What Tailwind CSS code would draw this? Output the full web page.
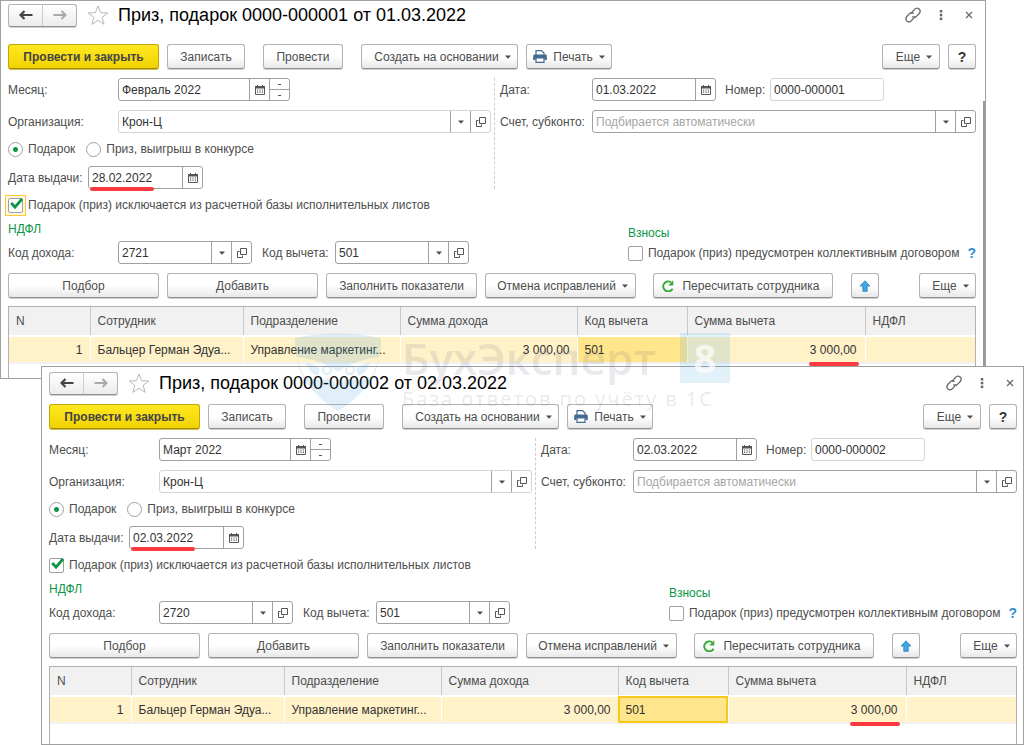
<!DOCTYPE html>
<html lang="ru">
<head>
<meta charset="utf-8">
<title>Приз, подарок</title>
<script src="https://cdn.jsdelivr.net/npm/@tailwindcss/browser@4"></script>
</head>
<body class="bg-white text-xs text-[#4d4d4d]" style="font-family:'Liberation Sans',Arial,sans-serif">
<svg class="hidden" aria-hidden="true">
  <symbol id="back" viewBox="0 0 14 10"><path d="M5.500 1 1.500 5l4 4M2 5h11.500" fill="none" stroke="currentColor" stroke-width="2.200"/></symbol>
  <symbol id="fwd" viewBox="0 0 14 10"><path d="M8.500 1l4 4-4 4M12 5H.5" fill="none" stroke="currentColor" stroke-width="2"/></symbol>
  <symbol id="star" viewBox="0 0 22 20"><path d="M11 1l2.600 6.700 7.200.3-5.700 4.400 2 6.900L11 15.300l-6.100 4 2-6.900L1.200 8l7.200-.3z" fill="#fff" stroke="#b4b9bd" stroke-width="1"/></symbol>
  <symbol id="link" viewBox="0 0 16 16"><g fill="none" stroke="#666" stroke-width="1.300" stroke-linecap="round"><path d="M6.300 6.200 9.300 2.700c1.300-1.500 3.400-1.900 4.800-.7 1.300 1.200 1.300 3 .1 4.500L11.500 9.400c-1 1.100-2.600 1.200-3.700.3"/><path d="M9.700 9.800 6.700 13.300c-1.300 1.500-3.400 1.900-4.800.7-1.300-1.200-1.300-3-.1-4.500L4.500 6.600c1-1.100 2.600-1.200 3.700-.3"/></g></symbol>
  <symbol id="dots" viewBox="0 0 4 12"><g fill="#666"><rect x=".8" y="1" width="2.500" height="2.500"/><rect x=".8" y="4.800" width="2.500" height="2.500"/><rect x=".8" y="8.600" width="2.500" height="2.500"/></g></symbol>
  <symbol id="close" viewBox="0 0 8 8"><path d="M1 1l6 6M7 1 1 7" stroke="#666" stroke-width="1.200"/></symbol>
  <symbol id="caret" viewBox="0 0 6 4"><path d="M0 .5h6L3 3.700z" fill="#4d4d4d"/></symbol>
  <symbol id="cal" viewBox="0 0 10 10"><path d="M.5 1.500h9v8h-9z" fill="#fff" stroke="#555"/><path d="M0 1h10v2.500H0z" fill="#555"/><path d="M2.500 0v2M7.500 0v2" stroke="#555"/><path d="M2 5h6M2 7.200h6" stroke="#555" stroke-width="1.200" stroke-dasharray="1.200 1.200"/></symbol>
  <symbol id="open" viewBox="0 0 10 10"><path d="M3.500.5h6v6h-6z" fill="#fff" stroke="#555"/><path d="M2.500 3.500h-2v6h5v-2" fill="none" stroke="#555"/></symbol>
  <symbol id="print" viewBox="0 0 14 13"><path d="M3 5V.6h5.500L11 3v2" fill="#fff" stroke="#446a91" stroke-width="1.200"/><path d="M1.500 4.500h11a1.300 1.300 0 0 1 1.300 1.300V10h-2.300V8h-9v2H.2V5.800a1.300 1.300 0 0 1 1.300-1.300z" fill="#446a91"/><path d="M3 8h8v4.400H3z" fill="#fff" stroke="#446a91" stroke-width="1.200"/></symbol>
  <symbol id="redo" viewBox="0 0 12 12"><path d="M10.600 8.800A5 5 0 1 1 9 2.200" fill="none" stroke="#36a936" stroke-width="1.900"/><path d="M11.300.3v5.200H6.200z" fill="#36a936"/></symbol>
  <symbol id="up" viewBox="0 0 12 12"><path d="M6 .8 11 6H8.200v5.300H3.800V6H1z" fill="#3fa9e8" stroke="#2b7fb8" stroke-width=".8"/></symbol>
  <symbol id="tick" viewBox="0 0 13 12"><path d="M1.200 5 5 9.200 12 1" fill="none" stroke="#0a9646" stroke-width="2.800"/></symbol>
</svg>

<main id="desktop" class="relative min-h-screen overflow-hidden"></main>

<script>
const btn = 'flex h-[25px] shrink-0 items-center justify-center rounded-[3px] border border-[#b3b3b3] border-b-[#8f8f8f] bg-linear-to-b from-white from-50% to-[#e8e8e8] shadow-[0_1px_0_#d0d0d0] whitespace-nowrap';
const fld = 'relative flex h-[23px] shrink-0 rounded-[3px] border border-[#a0a0a0] bg-white';
const pale = 'relative flex h-[23px] shrink-0 rounded-[3px] border border-[#d4d4d4] bg-white';
const inp = 'min-w-0 flex-1 bg-transparent px-[3px] text-[#333] outline-none placeholder:text-[#a6a6a6]';
const side = 'flex w-5 shrink-0 items-center justify-center border-l border-[#a0a0a0]';
const icon = (id, cls) => `<svg class="${cls}" aria-hidden="true"><use href="#${id}"/></svg>`;
const caret = icon('caret', 'h-1 w-1.5');
const calBtn = `<button class="${side}" aria-label="Календарь">${icon('cal', 'size-2.5')}</button>`;
const pick = `<button class="${side}" aria-label="Выбрать">${caret}</button><button class="${side}" aria-label="Открыть">${icon('open', 'size-2.5')}</button>`;

function card(d) {
  const id = d.id;
  return `
<section class="${d.frame}" aria-label="${d.title}">
  <header class="${d.head}">
    <div class="flex h-[23px] w-[69px] shrink-0 rounded-[3px] border border-[#b3b3b3] border-b-[#8f8f8f] bg-linear-to-b from-white to-[#ececec] shadow-[0_1px_0_#d0d0d0]">
      <button class="flex flex-1 items-center justify-center text-[#444]" aria-label="Назад">${icon('back', 'h-2.5 w-3.5')}</button>
      <button class="flex flex-1 items-center justify-center border-l border-[#ccc] text-[#aaa]" aria-label="Вперед">${icon('fwd', 'h-2.5 w-3.5')}</button>
    </div>
    <button class="ml-[10px]" aria-label="В избранное">${icon('star', 'h-5 w-[22px]')}</button>
    <h1 class="ml-[9px] text-lg leading-6 whitespace-nowrap text-black">${d.title}</h1>
    <div class="ml-auto flex items-center pr-[3px]">
      <button aria-label="Ссылка">${icon('link', 'size-4')}</button>
      <button class="ml-[18px]" aria-label="Меню">${icon('dots', 'h-3 w-1')}</button>
      <button class="ml-[22px]" aria-label="Закрыть">${icon('close', 'size-2')}</button>
    </div>
  </header>

  <div class="${d.bar}">
    <button class="flex h-[25px] w-[151px] items-center justify-center rounded-[3px] border border-[#c3a800] border-b-[#a08a00] bg-linear-to-b from-[#ffe81f] to-[#f2d200] font-bold whitespace-nowrap text-[#444] shadow-[0_1px_0_#cdbb55]">Провести и закрыть</button>
    <button class="${btn} ml-2 w-[78px]">Записать</button>
    <button class="${btn} ml-[18px] w-[80px]">Провести</button>
    <button class="${btn} ml-[18px] w-[157px] gap-1.5 pl-1.5">Создать на основании ${caret}</button>
    <button class="${btn} ml-2 w-[86px] gap-1.5">${icon('print', 'h-[13px] w-3.5')}Печать ${caret}</button>
    <button class="${btn} ml-auto w-[58px] gap-1.5 pl-1.5">Еще ${caret}</button>
    <button class="${btn} ml-2 w-7 text-sm font-bold text-[#333]" aria-label="Справка">?</button>
  </div>

  <div class="mt-[9px] flex">
    <div class="flex w-[487px] shrink-0 flex-col border-r border-dashed border-[#ccc]">
      <div class="flex items-center">
        <label for="m${id}" class="w-[110px]">Месяц:</label>
        <div class="${fld} w-[172px]"><input id="m${id}" class="${inp}" value="${d.month}">${calBtn}
          <div class="flex w-5 flex-col border-l border-[#a0a0a0]">
            <button class="flex flex-1 items-center justify-center border-b border-[#a0a0a0]" aria-label="Больше"><span class="h-px w-[3px] bg-[#555]"></span></button>
            <button class="flex flex-1 items-center justify-center" aria-label="Меньше"><span class="h-px w-[3px] bg-[#555]"></span></button>
          </div>
        </div>
      </div>
      <div class="mt-[9px] flex items-center">
        <label for="o${id}" class="w-[110px]">Организация:</label>
        <div class="${pale} w-[373px]"><input id="o${id}" class="${inp}" value="Крон-Ц">${pick}</div>
      </div>
      <div class="mt-2 flex h-4 items-center">
        <input id="g${id}" type="radio" name="k${id}" checked class="size-[15px] appearance-none rounded-full border border-[#a0a0a0] bg-[radial-gradient(circle,#0a9646_2px,white_3px)]"><label for="g${id}" class="ml-[5px]">Подарок</label>
        <input id="p${id}" type="radio" name="k${id}" class="ml-[11px] size-[15px] appearance-none rounded-full border border-[#a0a0a0] bg-white"><label for="p${id}" class="ml-[5px]">Приз, выигрыш в конкурсе</label>
      </div>
      <div class="mt-[9px] flex items-center">
        <label for="v${id}" class="w-[80px] whitespace-nowrap">Дата выдачи:</label>
        <div class="${fld} w-[115px]"><input id="v${id}" class="${inp}" value="${d.issued}">${calBtn}<span class="absolute top-[20px] left-[1px] h-1 w-16 rounded-full bg-[#fa3a40]"></span></div>
      </div>
    </div>
    <div class="ml-[5px] flex min-w-0 flex-1 flex-col">
      <div class="flex items-center">
        <label for="d${id}" class="w-[92px]">Дата:</label>
        <div class="${fld} w-[124px]"><input id="d${id}" class="${inp}" value="${d.date}">${calBtn}</div>
        <label for="n${id}" class="ml-[9px] w-[45px]">Номер:</label>
        <div class="${pale} w-[114px]"><input id="n${id}" class="${inp}" value="${d.number}"></div>
      </div>
      <div class="mt-[9px] flex items-center">
        <label for="s${id}" class="w-[92px] whitespace-nowrap">Счет, субконто:</label>
        <div class="${fld} min-w-0 flex-1"><input id="s${id}" class="${inp}" placeholder="Подбирается автоматически">${pick}</div>
      </div>
    </div>
  </div>

  <div class="mt-2 flex h-4 items-center">
    <span class="relative size-[15px]">${d.focus}<input id="x${id}" type="checkbox" checked class="block size-[15px] appearance-none rounded-[2px] border border-[#a0a0a0] bg-white">${icon('tick', 'pointer-events-none absolute top-0 left-0.5 h-3 w-[13px]')}</span>
    <label for="x${id}" class="ml-[5px]">Подарок (приз) исключается из расчетной базы исполнительных листов</label>
  </div>

  <div class="mt-2 flex justify-between">
    <div>
      <h2 class="h-4 leading-4 text-[#0a9646]">НДФЛ</h2>
      <div class="mt-1 flex items-center">
        <label for="i${id}" class="w-[110px]">Код дохода:</label>
        <div class="${fld} w-[134px]"><input id="i${id}" class="${inp}" value="${d.income}">${pick}</div>
        <label for="c${id}" class="ml-[10px] w-[73px] whitespace-nowrap">Код вычета:</label>
        <div class="${fld} w-[134px]"><input id="c${id}" class="${inp}" value="501">${pick}</div>
      </div>
    </div>
    <div class="pt-1">
      <h2 class="h-4 leading-4 text-[#0a9646]">Взносы</h2>
      <div class="mt-1 flex h-4 items-center">
        <input id="w${id}" type="checkbox" class="size-[15px] appearance-none rounded-[2px] border border-[#a0a0a0] bg-white"><label for="w${id}" class="ml-[5px] whitespace-nowrap">Подарок (приз) предусмотрен коллективным договором</label>
        <a href="#" class="ml-2 text-sm font-bold text-[#2f8fd0]">?</a>
      </div>
    </div>
  </div>

  <div class="mt-[9px] flex">
    <button class="${btn} w-[151px]">Подбор</button>
    <button class="${btn} ml-2 w-[151px]">Добавить</button>
    <button class="${btn} ml-2 w-[151px]">Заполнить показатели</button>
    <button class="${btn} ml-2 w-[151px] gap-1.5 pl-1">Отмена исправлений ${caret}</button>
    <button class="${btn} ml-[17px] w-[180px] gap-1.5 pr-1">${icon('redo', 'mr-0.5 size-3')}Пересчитать сотрудника</button>
    <button class="${btn} ml-[18px] w-7" aria-label="Вверх">${icon('up', 'size-3')}</button>
    <button class="${btn} ml-auto w-[57px] gap-1.5 pl-1.5">Еще ${caret}</button>
  </div>

  <div class="${d.grid}">
    <table class="w-full table-fixed border-collapse">
      <colgroup><col class="w-[81px]"><col class="w-[153px]"><col class="w-[157px]"><col class="w-[177px]"><col class="w-[110px]"><col class="w-[178px]"><col></colgroup>
      <thead><tr class="h-[29px] border-b border-[#c8c8c8] bg-[#f1f1f1] text-left">
        ${['N', 'Сотрудник', 'Подразделение', 'Сумма дохода', 'Код вычета', 'Сумма вычета', 'НДФЛ'].map(t => `<th class="border-r border-[#c8c8c8] px-[7px] font-normal last:border-r-0">${t}</th>`).join('')}
      </tr></thead>
      <tbody><tr class="h-[27px] border-y-2 border-t-white border-b-[#f1f1f1] bg-[#fff1c8] text-[#333]">
        <td class="border-r border-white px-[7px] text-right">1</td>
        <td class="border-r border-white px-[7px] whitespace-nowrap">Бальцер Герман Эдуа...</td>
        <td class="border-r border-white px-[7px] whitespace-nowrap">Управление маркетинг...</td>
        <td class="border-r border-white px-[7px] text-right">3 000,00</td>
        <td class="${d.cell}">501</td>
        <td class="relative border-r border-white px-2 text-right">3 000,00<span class="absolute right-1.5 -bottom-1 z-10 h-1 w-[50px] rounded-full bg-[#fa3a40]"></span></td>
        <td></td>
      </tr></tbody>
    </table>
  </div>
  ${d.extra}
</section>`;
}

document.getElementById('desktop').innerHTML = card({
  id: 1, title: 'Приз, подарок 0000-000001 от 01.03.2022', month: 'Февраль 2022', issued: '28.02.2022', date: '01.03.2022', number: '0000-000001', income: '2721',
  frame: 'absolute top-0 right-[38px] left-0 border border-[#a0a0a0] bg-white pr-[9px] pl-[7px]',
  head: 'flex h-7 items-center', bar: 'mt-[15px] flex',
  focus: '<span class="absolute -top-[3px] -left-[3px] size-[21px] border border-[#ffc933] bg-[#fff8e0]"></span>',
  grid: 'mt-2 h-[72px] border-x border-t border-[#b0b0b0]',
  cell: 'border-r border-white bg-[#ffe68c] px-[7px]',
  extra: '<div class="absolute top-[100px] right-0 bottom-0 w-0.5 bg-[#999]"></div>'
}).replace('block size-[15px]', 'relative block size-[15px]') + card({
  id: 2, title: 'Приз, подарок 0000-000002 от 02.03.2022', month: 'Март 2022', issued: '02.03.2022', date: '02.03.2022', number: '0000-000002', income: '2720',
  frame: 'absolute top-[366px] right-0 left-[41px] border border-[#a0a0a0] bg-white pr-[6px] pl-[7px]',
  head: 'flex h-8 items-center', bar: 'mt-[5px] flex',
  focus: '',
  grid: 'mt-2 h-[78px] border-x border-t border-[#b0b0b0]',
  cell: 'border-r border-white bg-[#ffe68c] px-[7px] outline-2 -outline-offset-2 outline-[#f7c91c]',
  extra: ''
}) + `
<div class="pointer-events-none absolute top-[333px] left-[294px] flex items-start text-[#5a5a78]/15" aria-hidden="true">
  <svg class="h-[79px] w-[88px]" viewBox="0 0 88 79">
    <mask id="owl"><rect width="88" height="79" fill="#fff"/>
      <path d="M2 24Q20 26 36 33l8 6 8-6Q68 26 86 24L78 43Q66 50 52 45l-8 8-8-8Q22 50 10 43z" fill="#000"/>
      <path d="M12 30q10 2 14 6l-2 7q-8-2-12-13zM76 30q-10 2-14 6l2 7q8-2 12-13z" fill="#fff"/>
      <circle cx="33" cy="37" r="4" fill="none" stroke="#fff" stroke-width="2.500"/><circle cx="56" cy="37" r="4" fill="none" stroke="#fff" stroke-width="2.500"/>
    </mask>
    <path d="M1 5Q44-4 87 5Q87 32 76 49Q62 68 44 78Q26 68 12 49Q1 32 1 5z" fill="#3c9bd7" fill-opacity=".16" mask="url(#owl)"/>
  </svg>
  <div class="ml-[20px] w-[328px]">
    <div class="flex h-[50px] items-center justify-between">
      <span class="text-[44px] leading-[50px] font-semibold" style="font-family:'Open Sans',sans-serif">БухЭксперт</span>
      <span class="flex size-[50px] items-center justify-center bg-[#3c9bd7]/15 text-[40px] font-bold text-white/70" style="font-family:'Open Sans',sans-serif">8</span>
    </div>
    <div class="mt-1 text-xl leading-6 tracking-widest whitespace-nowrap" style="font-family:'Open Sans',sans-serif">База ответов по учёту в 1С</div>
  </div>
</div>`;
</script>
</body>
</html>
